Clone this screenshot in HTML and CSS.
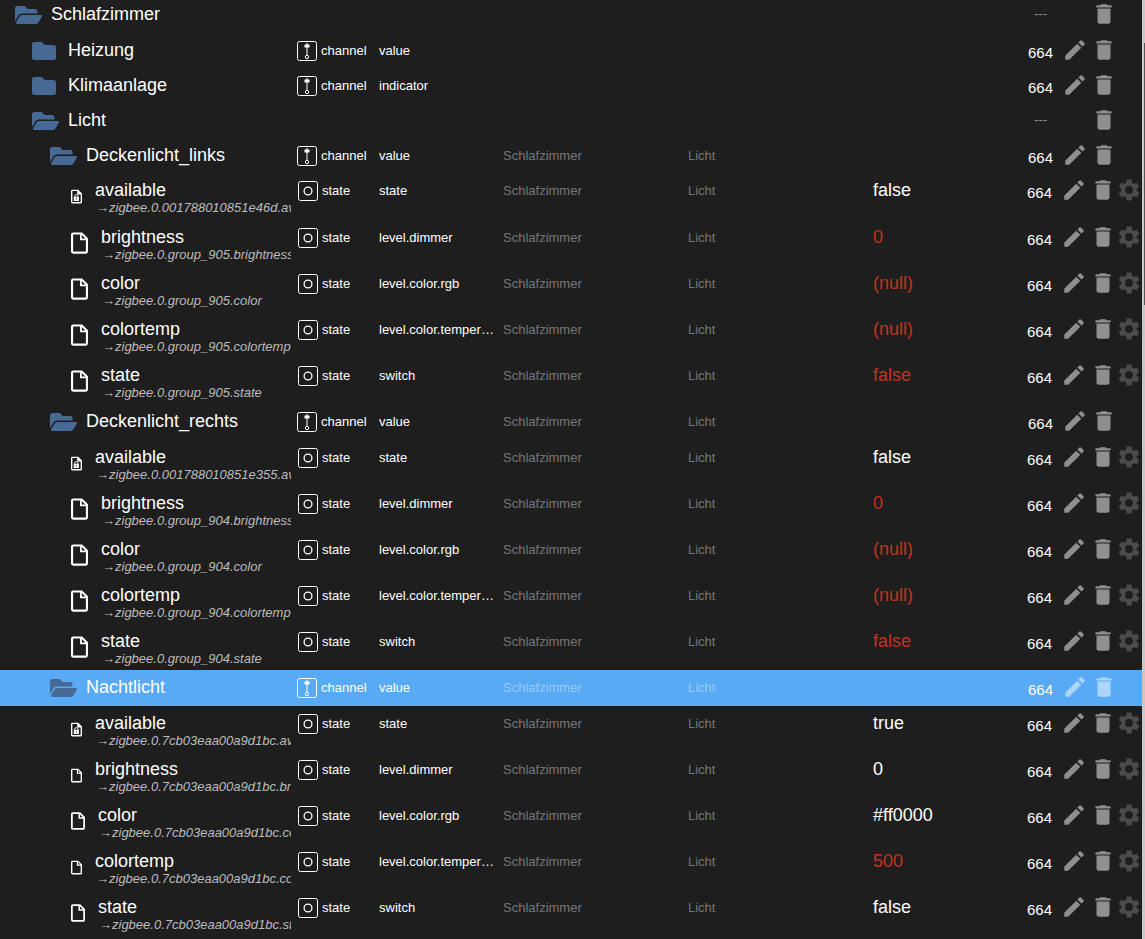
FILE: index.html
```html
<!DOCTYPE html>
<html lang="de">
<head>
<meta charset="utf-8">
<title>Objekte</title>
<link rel="stylesheet" href="styles.css">
</head>
<body>
<svg class="sprite" aria-hidden="true">
  <symbol id="open" viewBox="0 0 576 512"><path d="M572.7 292.1 500.3 416.2A64 64 0 0 1 445 448H45c-18.500 0-30-20.100-20.700-36.100l72.400-124.100A64 64 0 0 1 152 256h400c18.500 0 30 20.100 20.700 36.100zM152 224h328v-48c0-26.500-21.500-48-48-48H272l-64-64H48C21.500 64 0 85.500 0 112v278l69.100-118.400C86.200 242.200 118 224 152 224z"/></symbol>
  <symbol id="closed" viewBox="0 0 576 512"><path d="M464 128H272l-64-64H48C21.500 64 0 85.500 0 112v288c0 26.500 21.500 48 48 48h416c26.500 0 48-21.500 48-48V176c0-26.500-21.500-48-48-48z"/></symbol>
  <symbol id="file" viewBox="4 2 16 20"><path d="M14.500 2H6a2 2 0 0 0-2 2v16a2 2 0 0 0 2 2h12a2 2 0 0 0 2-2V7.500zM6 20V4h6.500v5.500H18V20zM14.200 4.500 17.500 7.800h-3.300z" fill-rule="evenodd"/></symbol>
  <symbol id="lock" viewBox="4 2 16 20"><path d="M14.500 2H6a2 2 0 0 0-2 2v16a2 2 0 0 0 2 2h12a2 2 0 0 0 2-2V7.500zM6 20V4h7v5h5v11z" fill-rule="evenodd"/><path d="M9.500 13v-1.500a2.300 2.300 0 0 1 4.600 0V13" fill="none" stroke="currentColor" stroke-width="1.300"/><path d="M8 12.500h7.500v6H8zm3 2v2h1.500v-2z" fill-rule="evenodd"/></symbol>
  <symbol id="channel" viewBox="0 0 20 20"><rect x=".5" y=".5" width="19" height="19" rx="2" fill="none" stroke="currentColor"/><path d="M9.500 2h1v12h-1z"/><path d="M7.500 3.500h5v3h-5z"/><circle cx="10" cy="16" r="1.700" fill="none" stroke="currentColor"/></symbol>
  <symbol id="state" viewBox="0 0 20 20"><rect x=".5" y=".5" width="19" height="19" rx="2" fill="none" stroke="currentColor"/><circle cx="10" cy="10" r="3.900" fill="none" stroke="currentColor" stroke-width="1.300"/></symbol>
  <symbol id="edit" viewBox="0 0 24 24"><path d="M3 17.460v3.040c0 .28.22.5.5.5h3.040c.13 0 .26-.05.35-.15L17.810 9.940l-3.750-3.750L3.150 17.100c-.1.1-.15.22-.15.360zM20.710 7.040a1 1 0 0 0 0-1.410l-2.340-2.340a1 1 0 0 0-1.410 0l-1.830 1.830 3.750 3.750z"/></symbol>
  <symbol id="trash" viewBox="0 0 24 24"><path d="M6 19c0 1.100.9 2 2 2h8c1.100 0 2-.9 2-2V7H6zM19 4h-3.500l-1-1h-5l-1 1H5v2h14z"/></symbol>
  <symbol id="gear" viewBox="0 0 24 24"><path d="M19.140 12.940c.04-.3.06-.61.06-.94 0-.32-.02-.64-.07-.94l2.030-1.580c.18-.14.23-.41.12-.61l-1.920-3.320c-.12-.22-.37-.29-.59-.22l-2.390.96c-.5-.38-1.030-.7-1.620-.94l-.36-2.540c-.04-.24-.24-.41-.48-.41h-3.840c-.24 0-.43.17-.47.41l-.36 2.540c-.59.24-1.130.57-1.620.94l-2.390-.96c-.22-.08-.47 0-.59.22L2.740 8.870c-.12.21-.08.47.12.61l2.030 1.580c-.05.3-.09.63-.09.94s.02.64.07.94l-2.030 1.580c-.18.14-.23.41-.12.61l1.920 3.320c.12.22.37.29.59.22l2.390-.96c.5.38 1.030.7 1.620.94l.36 2.540c.05.24.24.41.48.41h3.840c.24 0 .44-.17.47-.41l.36-2.540c.59-.24 1.130-.56 1.620-.94l2.390.96c.22.08.47 0 .59-.22l1.920-3.320c.12-.22.07-.47-.12-.61zM12 15.600A3.600 3.600 0 1 1 12 8.400a3.600 3.600 0 0 1 0 7.200z"/></symbol>
</svg>
<main class="app">
<table class="tree">
<tbody>
<tr class="row l0"><td class="name"><svg class="folder"><use href="#open"/></svg><span class="title">Schlafzimmer</span></td><td class="type"></td><td></td><td></td><td></td><td></td><td class="actions"><span class="none">---</span><i></i><button aria-label="Löschen"><svg><use href="#trash"/></svg></button></td></tr>
<tr class="row l1"><td class="name"><svg class="folder"><use href="#closed"/></svg><span class="title">Heizung</span></td><td class="type"><svg><use href="#channel"/></svg>channel</td><td class="role">value</td><td></td><td></td><td></td><td class="actions"><span>664</span><button aria-label="Bearbeiten"><svg><use href="#edit"/></svg></button><button aria-label="Löschen"><svg><use href="#trash"/></svg></button></td></tr>
<tr class="row l1"><td class="name"><svg class="folder"><use href="#closed"/></svg><span class="title">Klimaanlage</span></td><td class="type"><svg><use href="#channel"/></svg>channel</td><td class="role">indicator</td><td></td><td></td><td></td><td class="actions"><span>664</span><button aria-label="Bearbeiten"><svg><use href="#edit"/></svg></button><button aria-label="Löschen"><svg><use href="#trash"/></svg></button></td></tr>
<tr class="row l1"><td class="name"><svg class="folder"><use href="#open"/></svg><span class="title">Licht</span></td><td class="type"></td><td></td><td></td><td></td><td></td><td class="actions"><span class="none">---</span><i></i><button aria-label="Löschen"><svg><use href="#trash"/></svg></button></td></tr>
<tr class="row l2"><td class="name"><svg class="folder"><use href="#open"/></svg><span class="title">Deckenlicht_links</span></td><td class="type"><svg><use href="#channel"/></svg>channel</td><td class="role">value</td><td class="dim">Schlafzimmer</td><td class="dim">Licht</td><td></td><td class="actions"><span>664</span><button aria-label="Bearbeiten"><svg><use href="#edit"/></svg></button><button aria-label="Löschen"><svg><use href="#trash"/></svg></button></td></tr>
<tr class="row item"><td class="name"><svg class="file sm"><use href="#lock"/></svg><span class="title">available<em>→zigbee.0.001788010851e46d.available</em></span></td><td class="type"><svg><use href="#state"/></svg>state</td><td class="role">state</td><td class="dim">Schlafzimmer</td><td class="dim">Licht</td><td class="value">false</td><td class="actions"><span>664</span><button aria-label="Bearbeiten"><svg><use href="#edit"/></svg></button><button aria-label="Löschen"><svg><use href="#trash"/></svg></button><button class="cfg" aria-label="Einstellungen"><svg><use href="#gear"/></svg></button></td></tr>
<tr class="row item"><td class="name"><svg class="file lg"><use href="#file"/></svg><span class="title">brightness<em>→zigbee.0.group_905.brightness</em></span></td><td class="type"><svg><use href="#state"/></svg>state</td><td class="role">level.dimmer</td><td class="dim">Schlafzimmer</td><td class="dim">Licht</td><td class="value red">0</td><td class="actions"><span>664</span><button aria-label="Bearbeiten"><svg><use href="#edit"/></svg></button><button aria-label="Löschen"><svg><use href="#trash"/></svg></button><button class="cfg" aria-label="Einstellungen"><svg><use href="#gear"/></svg></button></td></tr>
<tr class="row item"><td class="name"><svg class="file lg"><use href="#file"/></svg><span class="title">color<em>→zigbee.0.group_905.color</em></span></td><td class="type"><svg><use href="#state"/></svg>state</td><td class="role">level.color.rgb</td><td class="dim">Schlafzimmer</td><td class="dim">Licht</td><td class="value red">(null)</td><td class="actions"><span>664</span><button aria-label="Bearbeiten"><svg><use href="#edit"/></svg></button><button aria-label="Löschen"><svg><use href="#trash"/></svg></button><button class="cfg" aria-label="Einstellungen"><svg><use href="#gear"/></svg></button></td></tr>
<tr class="row item"><td class="name"><svg class="file lg"><use href="#file"/></svg><span class="title">colortemp<em>→zigbee.0.group_905.colortemp</em></span></td><td class="type"><svg><use href="#state"/></svg>state</td><td class="role">level.color.temperature</td><td class="dim">Schlafzimmer</td><td class="dim">Licht</td><td class="value red">(null)</td><td class="actions"><span>664</span><button aria-label="Bearbeiten"><svg><use href="#edit"/></svg></button><button aria-label="Löschen"><svg><use href="#trash"/></svg></button><button class="cfg" aria-label="Einstellungen"><svg><use href="#gear"/></svg></button></td></tr>
<tr class="row item"><td class="name"><svg class="file lg"><use href="#file"/></svg><span class="title">state<em>→zigbee.0.group_905.state</em></span></td><td class="type"><svg><use href="#state"/></svg>state</td><td class="role">switch</td><td class="dim">Schlafzimmer</td><td class="dim">Licht</td><td class="value red">false</td><td class="actions"><span>664</span><button aria-label="Bearbeiten"><svg><use href="#edit"/></svg></button><button aria-label="Löschen"><svg><use href="#trash"/></svg></button><button class="cfg" aria-label="Einstellungen"><svg><use href="#gear"/></svg></button></td></tr>
<tr class="row l2"><td class="name"><svg class="folder"><use href="#open"/></svg><span class="title">Deckenlicht_rechts</span></td><td class="type"><svg><use href="#channel"/></svg>channel</td><td class="role">value</td><td class="dim">Schlafzimmer</td><td class="dim">Licht</td><td></td><td class="actions"><span>664</span><button aria-label="Bearbeiten"><svg><use href="#edit"/></svg></button><button aria-label="Löschen"><svg><use href="#trash"/></svg></button></td></tr>
<tr class="row item"><td class="name"><svg class="file sm"><use href="#lock"/></svg><span class="title">available<em>→zigbee.0.001788010851e355.available</em></span></td><td class="type"><svg><use href="#state"/></svg>state</td><td class="role">state</td><td class="dim">Schlafzimmer</td><td class="dim">Licht</td><td class="value">false</td><td class="actions"><span>664</span><button aria-label="Bearbeiten"><svg><use href="#edit"/></svg></button><button aria-label="Löschen"><svg><use href="#trash"/></svg></button><button class="cfg" aria-label="Einstellungen"><svg><use href="#gear"/></svg></button></td></tr>
<tr class="row item"><td class="name"><svg class="file lg"><use href="#file"/></svg><span class="title">brightness<em>→zigbee.0.group_904.brightness</em></span></td><td class="type"><svg><use href="#state"/></svg>state</td><td class="role">level.dimmer</td><td class="dim">Schlafzimmer</td><td class="dim">Licht</td><td class="value red">0</td><td class="actions"><span>664</span><button aria-label="Bearbeiten"><svg><use href="#edit"/></svg></button><button aria-label="Löschen"><svg><use href="#trash"/></svg></button><button class="cfg" aria-label="Einstellungen"><svg><use href="#gear"/></svg></button></td></tr>
<tr class="row item"><td class="name"><svg class="file lg"><use href="#file"/></svg><span class="title">color<em>→zigbee.0.group_904.color</em></span></td><td class="type"><svg><use href="#state"/></svg>state</td><td class="role">level.color.rgb</td><td class="dim">Schlafzimmer</td><td class="dim">Licht</td><td class="value red">(null)</td><td class="actions"><span>664</span><button aria-label="Bearbeiten"><svg><use href="#edit"/></svg></button><button aria-label="Löschen"><svg><use href="#trash"/></svg></button><button class="cfg" aria-label="Einstellungen"><svg><use href="#gear"/></svg></button></td></tr>
<tr class="row item"><td class="name"><svg class="file lg"><use href="#file"/></svg><span class="title">colortemp<em>→zigbee.0.group_904.colortemp</em></span></td><td class="type"><svg><use href="#state"/></svg>state</td><td class="role">level.color.temperature</td><td class="dim">Schlafzimmer</td><td class="dim">Licht</td><td class="value red">(null)</td><td class="actions"><span>664</span><button aria-label="Bearbeiten"><svg><use href="#edit"/></svg></button><button aria-label="Löschen"><svg><use href="#trash"/></svg></button><button class="cfg" aria-label="Einstellungen"><svg><use href="#gear"/></svg></button></td></tr>
<tr class="row item"><td class="name"><svg class="file lg"><use href="#file"/></svg><span class="title">state<em>→zigbee.0.group_904.state</em></span></td><td class="type"><svg><use href="#state"/></svg>state</td><td class="role">switch</td><td class="dim">Schlafzimmer</td><td class="dim">Licht</td><td class="value red">false</td><td class="actions"><span>664</span><button aria-label="Bearbeiten"><svg><use href="#edit"/></svg></button><button aria-label="Löschen"><svg><use href="#trash"/></svg></button><button class="cfg" aria-label="Einstellungen"><svg><use href="#gear"/></svg></button></td></tr>
<tr class="row l2 selected"><td class="name"><svg class="folder"><use href="#open"/></svg><span class="title">Nachtlicht</span></td><td class="type"><svg><use href="#channel"/></svg>channel</td><td class="role">value</td><td class="dim">Schlafzimmer</td><td class="dim">Licht</td><td></td><td class="actions"><span>664</span><button aria-label="Bearbeiten"><svg><use href="#edit"/></svg></button><button aria-label="Löschen"><svg><use href="#trash"/></svg></button></td></tr>
<tr class="row item"><td class="name"><svg class="file sm"><use href="#lock"/></svg><span class="title">available<em>→zigbee.0.7cb03eaa00a9d1bc.available</em></span></td><td class="type"><svg><use href="#state"/></svg>state</td><td class="role">state</td><td class="dim">Schlafzimmer</td><td class="dim">Licht</td><td class="value">true</td><td class="actions"><span>664</span><button aria-label="Bearbeiten"><svg><use href="#edit"/></svg></button><button aria-label="Löschen"><svg><use href="#trash"/></svg></button><button class="cfg" aria-label="Einstellungen"><svg><use href="#gear"/></svg></button></td></tr>
<tr class="row item"><td class="name"><svg class="file sm"><use href="#file"/></svg><span class="title">brightness<em>→zigbee.0.7cb03eaa00a9d1bc.brightness</em></span></td><td class="type"><svg><use href="#state"/></svg>state</td><td class="role">level.dimmer</td><td class="dim">Schlafzimmer</td><td class="dim">Licht</td><td class="value">0</td><td class="actions"><span>664</span><button aria-label="Bearbeiten"><svg><use href="#edit"/></svg></button><button aria-label="Löschen"><svg><use href="#trash"/></svg></button><button class="cfg" aria-label="Einstellungen"><svg><use href="#gear"/></svg></button></td></tr>
<tr class="row item"><td class="name"><svg class="file md"><use href="#file"/></svg><span class="title">color<em>→zigbee.0.7cb03eaa00a9d1bc.color</em></span></td><td class="type"><svg><use href="#state"/></svg>state</td><td class="role">level.color.rgb</td><td class="dim">Schlafzimmer</td><td class="dim">Licht</td><td class="value">#ff0000</td><td class="actions"><span>664</span><button aria-label="Bearbeiten"><svg><use href="#edit"/></svg></button><button aria-label="Löschen"><svg><use href="#trash"/></svg></button><button class="cfg" aria-label="Einstellungen"><svg><use href="#gear"/></svg></button></td></tr>
<tr class="row item"><td class="name"><svg class="file sm"><use href="#file"/></svg><span class="title">colortemp<em>→zigbee.0.7cb03eaa00a9d1bc.colortemp</em></span></td><td class="type"><svg><use href="#state"/></svg>state</td><td class="role">level.color.temperature</td><td class="dim">Schlafzimmer</td><td class="dim">Licht</td><td class="value red">500</td><td class="actions"><span>664</span><button aria-label="Bearbeiten"><svg><use href="#edit"/></svg></button><button aria-label="Löschen"><svg><use href="#trash"/></svg></button><button class="cfg" aria-label="Einstellungen"><svg><use href="#gear"/></svg></button></td></tr>
<tr class="row item"><td class="name"><svg class="file md"><use href="#file"/></svg><span class="title">state<em>→zigbee.0.7cb03eaa00a9d1bc.state</em></span></td><td class="type"><svg><use href="#state"/></svg>state</td><td class="role">switch</td><td class="dim">Schlafzimmer</td><td class="dim">Licht</td><td class="value">false</td><td class="actions"><span>664</span><button aria-label="Bearbeiten"><svg><use href="#edit"/></svg></button><button aria-label="Löschen"><svg><use href="#trash"/></svg></button><button class="cfg" aria-label="Einstellungen"><svg><use href="#gear"/></svg></button></td></tr>
</tbody>
</table>
<div class="scrollbar" aria-hidden="true"><div class="thumb"></div></div>
</main>
</body>
</html>
```

FILE: styles.css
```css
* { box-sizing: border-box; }

body {
  margin: 0;
  background: #1e1e1e;
  color: #fff;
  font: 13px/36px "Liberation Sans", Arial, sans-serif;
}

.sprite { display: none; }

svg { display: block; flex: none; fill: currentColor; }

.app {
  display: grid;
  grid-template-columns: minmax(0, 1fr) 3px;
  height: 100vh;
  overflow: hidden;
}

/* The list is scrolled slightly past its first row. */
.tree { display: block; margin-top: -3px; }
.tree tbody { display: block; }

.row {
  display: grid;
  grid-template-columns: minmax(0, 297fr) 82px minmax(0, 124fr) minmax(0, 185fr) minmax(0, 185fr) minmax(0, 154fr) 115px;
  height: 35px;
}
.row.l0, .row.l2 { height: 36px; }
.row.l2:nth-child(5) { height: 35px; }
.row.item { height: 46px; }
.row.l2:nth-child(5) + .item { height: 47px; }
.row.selected { background: #57aaf3; }

td { padding: 0; white-space: nowrap; }

.name { display: flex; overflow: hidden; margin-right: 6px; }
.l0 .name { padding-left: 15px; }
.l1 .name { padding-left: 32px; }
.l2 .name { padding-left: 50px; }
.item .name { padding-left: 71px; gap: 13px; }

.folder { width: 27px; height: 24px; margin: 6px 9px 0 0; color: #466a93; }
.file { align-self: center; }
.file.sm { width: 11px; height: 15px; }
.file.md { width: 14px; height: 18px; }
.file.lg { width: 17px; height: 22px; }

.title { font-size: 18px; line-height: 34px; }
.item .title { line-height: 22px; padding-top: 6px; }
.title em { display: block; padding-left: 1px; font-size: 13px; line-height: 14px; color: #bcbcbc; }

.type { display: flex; gap: 4px; }
.type svg { width: 20px; height: 20px; margin-top: 8px; }
.item .type { padding-left: 1px; }

.role { overflow: hidden; text-overflow: ellipsis; padding-right: 6px; }
.dim { color: rgba(255, 255, 255, .4); }
.value { font-size: 18px; line-height: 34px; }
.red { color: #c33220; }

.actions { display: flex; padding-left: 1px; }
.item .actions { padding-left: 0; }
.actions span { width: 25px; margin-right: 9px; padding-top: 2px; font-size: 15px; text-align: center; }
.actions .none { padding-top: 0; font-size: 13px; line-height: 34px; color: rgba(255, 255, 255, .5); }
.actions i { width: 29px; }

button {
  width: 26px;
  height: 26px;
  margin: 4px 0 0;
  padding: 0;
  border: 0;
  background: none;
  color: rgba(255, 255, 255, .5);
}
button svg { width: 26px; height: 26px; }
span + button { margin-right: 3px; }
button.cfg { color: rgba(255, 255, 255, .2); }

.scrollbar { background: #c8c8c8; padding: 43px 0 0 2px; }
.thumb { height: 262px; background: #555; }
```
